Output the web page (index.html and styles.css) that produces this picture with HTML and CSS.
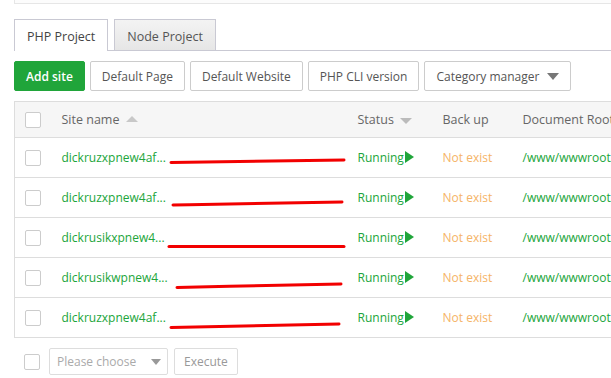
FILE: index.html
```html
<!DOCTYPE html>
<html lang="en">
<head>
  <meta charset="UTF-8">
  <title>Website</title>
  <link rel="stylesheet" href="styles.css">
</head>
<body>
  <div class="page">
    <div class="top-box"></div>

    <div class="tabs">
      <span class="tab active">PHP Project</span>
      <span class="tab">Node Project</span>
    </div>

    <div class="toolbar">
      <button class="btn btn-green">Add site</button>
      <button class="btn">Default Page</button>
      <button class="btn">Default Website</button>
      <button class="btn">PHP CLI version</button>
      <button class="btn">Category manager <span class="caret"></span></button>
    </div>

    <table class="sites">
      <colgroup>
        <col class="c-check">
        <col class="c-name">
        <col class="c-status">
        <col class="c-backup">
        <col class="c-root">
      </colgroup>
      <thead>
        <tr>
          <th><span class="check"></span></th>
          <th>Site name <span class="sort up"></span></th>
          <th>Status <span class="sort down"></span></th>
          <th>Back up</th>
          <th>Document Root</th>
        </tr>
      </thead>
      <tbody>
        <tr>
          <td><span class="check"></span></td>
          <td class="name">dickruzxpnew4af...
            <svg class="scribble" width="300" height="40"><path d="M119 24.5 C170 23.5 230 23 292 22"/></svg>
          </td>
          <td class="running">Running<span class="play"></span></td>
          <td class="backup">Not exist</td>
          <td class="root">/www/wwwroot/dickruzxpnew4af</td>
        </tr>
        <tr>
          <td><span class="check"></span></td>
          <td class="name">dickruzxpnew4af...
            <svg class="scribble" width="300" height="40"><path d="M121 27 C180 26 240 25 290 24"/></svg>
          </td>
          <td class="running">Running<span class="play"></span></td>
          <td class="backup">Not exist</td>
          <td class="root">/www/wwwroot/dickruzxpnew4af</td>
        </tr>
        <tr>
          <td><span class="check"></span></td>
          <td class="name">dickrusikxpnew4...
            <svg class="scribble" width="300" height="40"><path d="M117 28.5 C180 28 240 28 292 28.5"/></svg>
          </td>
          <td class="running">Running<span class="play"></span></td>
          <td class="backup">Not exist</td>
          <td class="root">/www/wwwroot/dickrusikxpnew4</td>
        </tr>
        <tr>
          <td><span class="check"></span></td>
          <td class="name">dickrusikwpnew4...
            <svg class="scribble" width="300" height="40"><path d="M125 29.5 C180 28 240 27 289 26"/></svg>
          </td>
          <td class="running">Running<span class="play"></span></td>
          <td class="backup">Not exist</td>
          <td class="root">/www/wwwroot/dickrusikwpnew4</td>
        </tr>
        <tr>
          <td><span class="check"></span></td>
          <td class="name">dickruzxpnew4af...
            <svg class="scribble" width="300" height="40"><path d="M119 29.5 C180 28 240 27 287 26"/></svg>
          </td>
          <td class="running">Running<span class="play"></span></td>
          <td class="backup">Not exist</td>
          <td class="root">/www/wwwroot/dickruzxpnew4af</td>
        </tr>
      </tbody>
    </table>

    <div class="batch">
      <span class="check"></span>
      <div class="select">Please choose <span class="caret"></span></div>
      <button class="btn btn-disabled">Execute</button>
    </div>
  </div>
</body>
</html>
```

FILE: styles.css
```css
html, body {
  margin: 0;
  background-color: #ffffff;
  overflow: hidden;
}

body {
  font-family: "Open Sans", "Noto Sans", sans-serif;
  font-size: 12px;
  color: #555;
}

.page {
  padding-left: 14px;
  width: 720px;
}

.top-box {
  height: 3px;
  border-left: 1px solid #e6e6e6;
  border-bottom: 1px solid #e6e6e6;
  background-color: #fcfcfc;
}

.tabs {
  display: flex;
  gap: 6px;
  margin-top: 15px;
  border-bottom: 1px solid #c9c9d3;
  height: 31px;
}

.tab {
  display: flex;
  align-items: center;
  padding: 2px 12px 0;
  height: 28px;
  border: 1px solid #c9c9d3;
  border-bottom: none;
  background: linear-gradient(#f3f3f3, #e6e6e6);
  font-size: 12.5px;
  color: #555;
}

.tab.active {
  background: #ffffff;
  height: 29px;
  color: #444;
}

.toolbar {
  display: flex;
  gap: 5px;
  margin-top: 10px;
}

.btn {
  font-family: inherit;
  font-size: 12px;
  height: 30px;
  padding: 0 11px;
  border: 1px solid #ccc;
  border-radius: 2px;
  background-color: #ffffff;
  color: #555;
  display: flex;
  align-items: center;
  gap: 8px;
}

.btn-green {
  background-color: #20a53a;
  border-color: #20a53a;
  color: #ffffff;
  font-weight: 600;
  padding: 0 11px;
}

.caret {
  display: inline-block;
  width: 0;
  height: 0;
  border-left: 6px solid transparent;
  border-right: 6px solid transparent;
  border-top: 7px solid #777;
}

.sites {
  margin-top: 10px;
  border-collapse: collapse;
  table-layout: fixed;
  width: 706px;
  border: 1px solid #ddd;
}

.c-check { width: 37px; }
.c-name { width: 294px; }
.c-status { width: 85px; }
.c-backup { width: 80px; }
.c-root { width: 210px; }

.sites th,
.sites td {
  padding: 0 0 0 12px;
  text-align: left;
  white-space: nowrap;
  overflow: hidden;
  border-bottom: 1px solid #ddd;
}

.sites th:first-child,
.sites td:first-child {
  padding-left: 10px;
}

.sites td:nth-child(2),
.sites th:nth-child(2) {
  padding-left: 10px;
}

.sites th {
  height: 35px;
  background-color: #f6f6f6;
  font-weight: normal;
  color: #666;
  font-size: 12.5px;
}

.sites td {
  height: 39px;
  color: #20a53a;
}

.check {
  display: inline-block;
  width: 14px;
  height: 14px;
  border: 1px solid #ccc;
  border-radius: 2px;
  background-color: #ffffff;
  vertical-align: middle;
}

.sort {
  display: inline-block;
  width: 0;
  height: 0;
  margin-left: 3px;
  vertical-align: middle;
  border-left: 6px solid transparent;
  border-right: 6px solid transparent;
}

.sort.up {
  border-bottom: 6px solid #c8c8c8;
  margin-top: -3px;
}

.sort.down {
  border-top: 6px solid #bbb;
}

.sites td.name {
  position: relative;
  overflow: visible;
}

.scribble {
  position: absolute;
  left: 0;
  top: 0;
  pointer-events: none;
}

.scribble path {
  fill: none;
  stroke: #f20000;
  stroke-width: 3;
  stroke-linecap: round;
}

.play {
  display: inline-block;
  width: 0;
  height: 0;
  margin-left: 1px;
  vertical-align: -1px;
  border-top: 6px solid transparent;
  border-bottom: 6px solid transparent;
  border-left: 9px solid #20a53a;
}

.sites td.backup {
  color: #f4a84c;
  opacity: 0.85;
}

.batch {
  display: flex;
  align-items: center;
  gap: 6px;
  margin-top: 10px;
  padding-left: 10px;
}

.batch .check {
  margin-right: 3px;
}

.select {
  display: flex;
  align-items: center;
  justify-content: space-between;
  width: 104px;
  height: 25px;
  padding: 0 6px 0 7px;
  border: 1px solid #ddd;
  border-radius: 2px;
  color: #aaa;
}

.select .caret {
  border-top-color: #999;
  border-left-width: 5px;
  border-right-width: 5px;
  border-top-width: 6px;
}

.btn-disabled {
  height: 27px;
  padding: 0 9px;
  border-color: #ddd;
  color: #999;
}
```
